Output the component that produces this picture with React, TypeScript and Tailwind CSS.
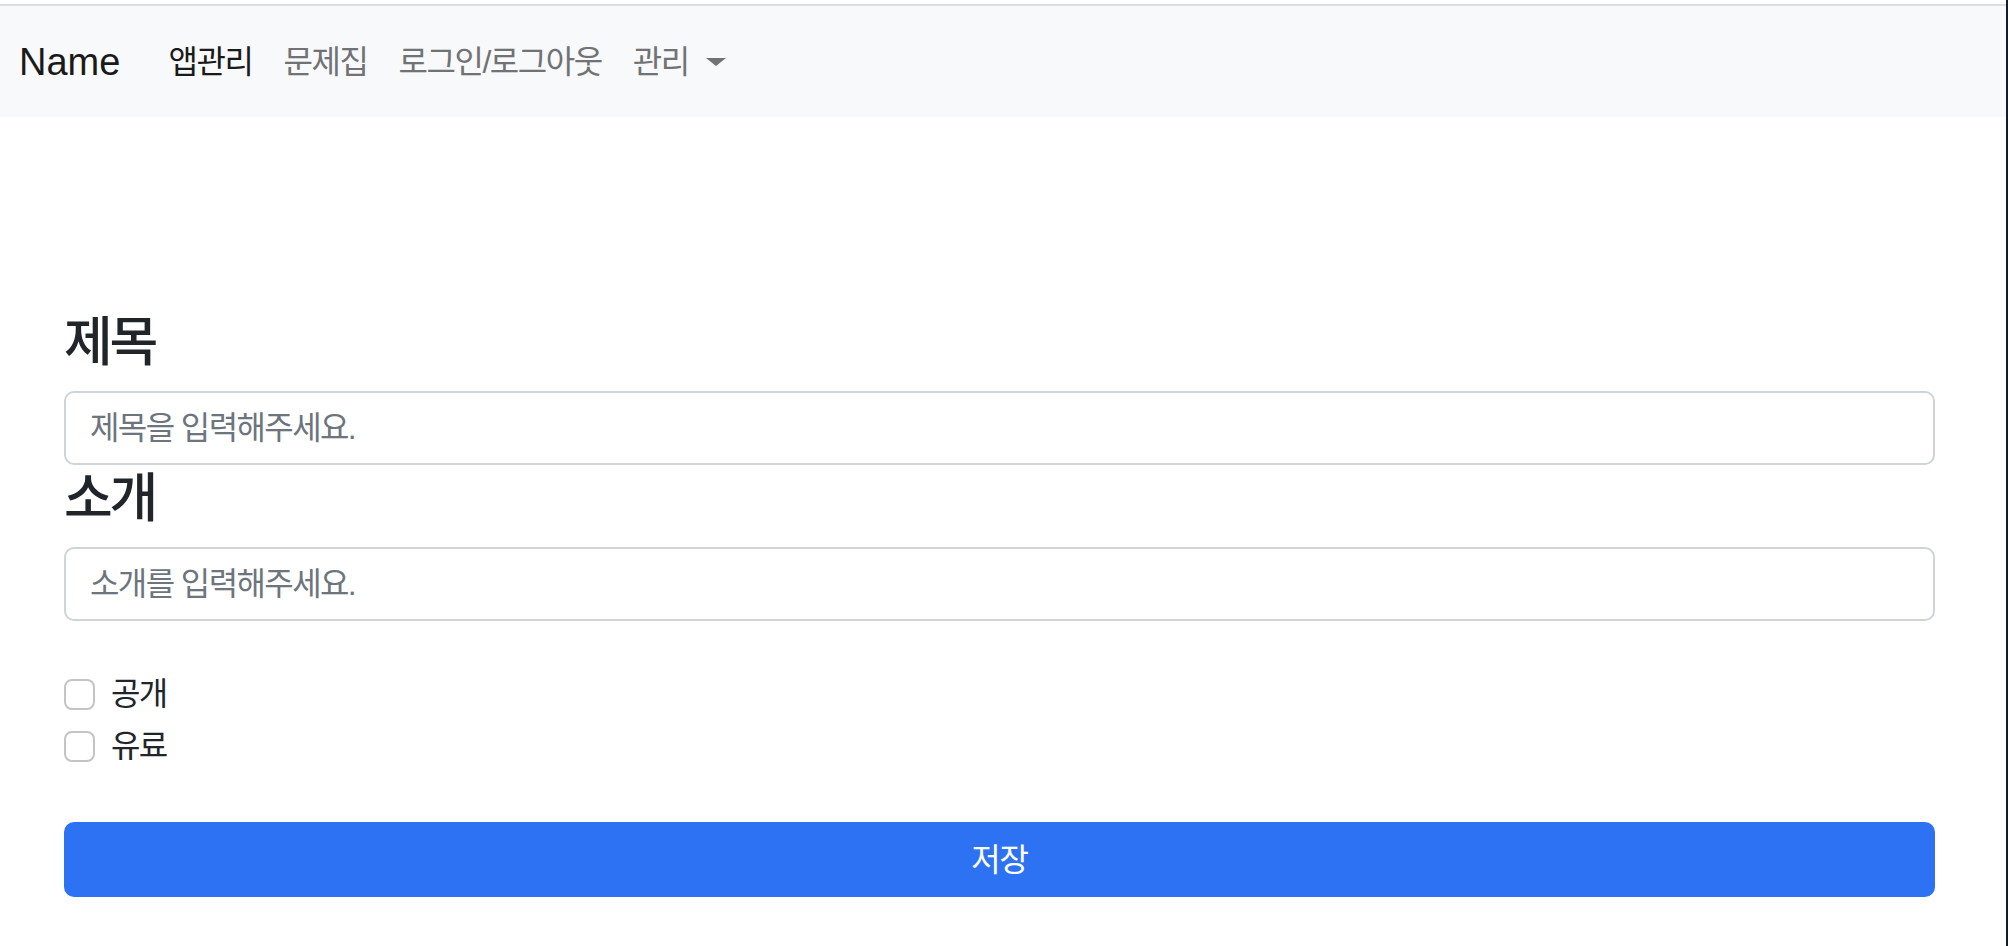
import { useState } from 'react';

const NAV = ['앱관리', '문제집', '로그인/로그아웃'];

export default function App() {
    const [title, setTitle] = useState('');
    const [intro, setIntro] = useState('');
    const [isPublic, setIsPublic] = useState(false);
    const [isPaid, setIsPaid] = useState(false);

    return (
        <div className="flex min-h-[946px] w-[2008px] bg-white font-['Liberation_Sans','Noto_Sans_CJK_KR',sans-serif] text-[#212529]">
            <div className="flex-1">
                {/* top rule + navbar */}
                <div className="h-[4px] bg-white" />
                <div className="h-[2px] bg-[#dcdde0]" />
                <nav className="flex h-[111px] items-center bg-[#f8f9fa] pl-[19px]">
                    <span className="text-[38px] leading-none text-[#1a1a1a]">Name</span>
                    <div className="ml-[48px] flex items-center gap-[31px] text-[32px] tracking-[-0.045em]">
                        {NAV.map((label, i) => (
                            <a
                                key={label}
                                href="#"
                                className={i === 0 ? 'text-[#1a1a1a]' : 'text-[#717273]'}
                            >
                                {label}
                            </a>
                        ))}
                        <a href="#" className="flex items-center text-[#717273]">
                            관리
                            <span className="ml-[17px] h-0 w-0 border-x-[10px] border-t-[8px] border-x-transparent border-t-[#717273]" />
                        </a>
                    </div>
                </nav>

                {/* form */}
                <form
                    className="flex flex-col pl-[64px] pr-[71px] pt-[192px]"
                    onSubmit={(e) => e.preventDefault()}
                >
                    <h3 className="mb-[15px] h-[67px] text-[53px] font-medium leading-[67px] tracking-[-0.06em]">
                        제목
                    </h3>
                    <input
                        value={title}
                        onChange={(e) => setTitle(e.target.value)}
                        placeholder="제목을 입력해주세요."
                        className="h-[74px] rounded-[10px] border-2 border-[#ced4da] px-[24px] text-[32px] tracking-[-0.05em] outline-none placeholder:text-[#6c757d]"
                    />
                    <h3 className="mb-[15px] h-[67px] text-[53px] font-medium leading-[67px] tracking-[-0.06em]">
                        소개
                    </h3>
                    <input
                        value={intro}
                        onChange={(e) => setIntro(e.target.value)}
                        placeholder="소개를 입력해주세요."
                        className="h-[74px] rounded-[10px] border-2 border-[#ced4da] px-[24px] text-[32px] tracking-[-0.05em] outline-none placeholder:text-[#6c757d]"
                    />

                    <div className="mt-[49px] flex flex-col gap-[4px]">
                        <Check label="공개" checked={isPublic} onChange={setIsPublic} />
                        <Check label="유료" checked={isPaid} onChange={setIsPaid} />
                    </div>

                    <button
                        type="submit"
                        className="mt-[52px] h-[75px] rounded-[10px] bg-[#2d72f3] text-[32px] tracking-[-0.04em] text-white"
                    >
                        저장
                    </button>
                </form>
            </div>
            <div className="w-[2px] bg-[#161b2b]" />
        </div>
    );
}

function Check({
    label,
    checked,
    onChange,
}: {
    label: string;
    checked: boolean;
    onChange: (v: boolean) => void;
}) {
    return (
        <label className="flex h-[48px] cursor-pointer items-center">
            <span
                onClick={() => onChange(!checked)}
                className={
                    checked
                        ? 'h-[31px] w-[31px] rounded-[8px] border-2 border-[#2d72f3] bg-[#2d72f3]'
                        : 'h-[31px] w-[31px] rounded-[8px] border-2 border-[#c4c4c4] bg-white'
                }
            />
            <span className="ml-[16px] text-[32px] tracking-[-0.05em] text-[#212529]">{label}</span>
        </label>
    );
}
